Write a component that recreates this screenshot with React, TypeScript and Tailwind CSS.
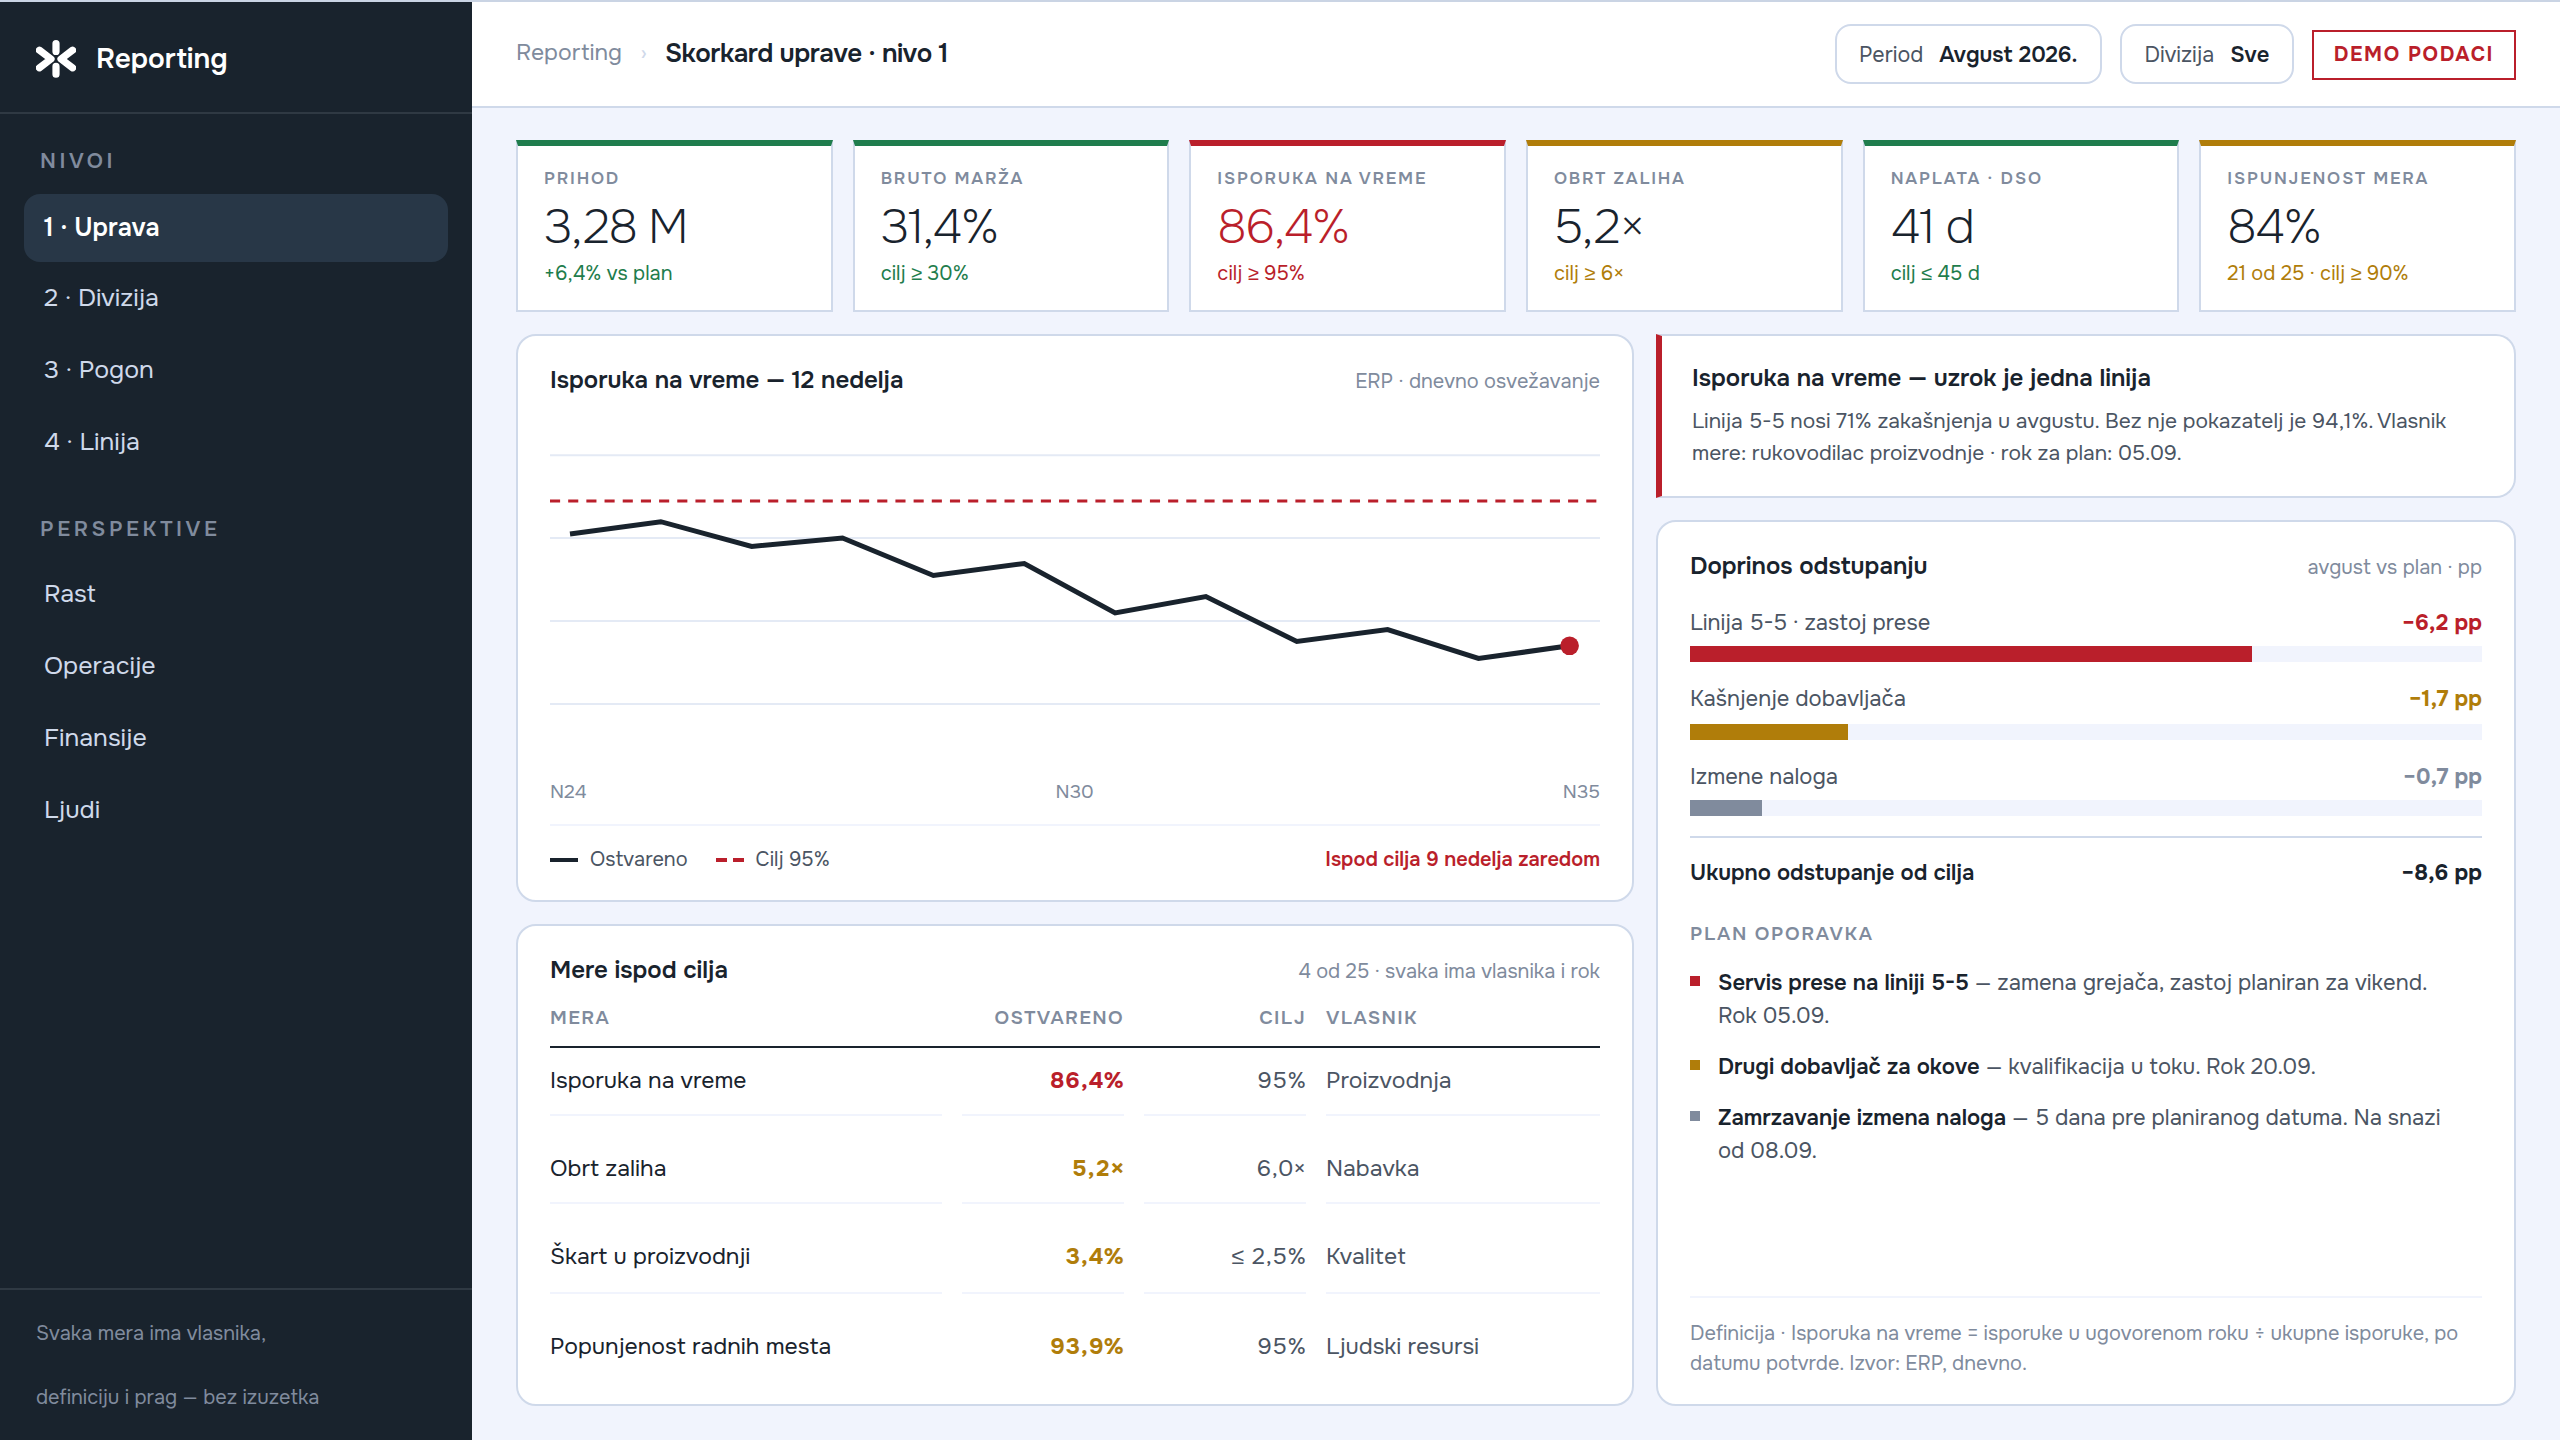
import type { ReactNode } from "react";
import clsx from "clsx";

type Tone = "good" | "warn" | "bad" | "mute";

const TEXT: Record<Tone, string> = {
  good: "text-[#1f7d4d]",
  warn: "text-[#b07d0a]",
  bad: "text-[#ba1f2b]",
  mute: "text-[#808b9d]",
};

const FILL: Record<Tone, string> = {
  good: "bg-[#1f7d4d]",
  warn: "bg-[#b07d0a]",
  bad: "bg-[#ba1f2b]",
  mute: "bg-[#808b9d]",
};

const TOP: Record<Tone, string> = {
  good: "border-t-[#1f7d4d]",
  warn: "border-t-[#b07d0a]",
  bad: "border-t-[#ba1f2b]",
  mute: "border-t-[#808b9d]",
};

const LEVELS = ["1 · Uprava", "2 · Divizija", "3 · Pogon", "4 · Linija"];
const PERSPECTIVES = ["Rast", "Operacije", "Finansije", "Ljudi"];

const KPIS: { label: string; value: string; note: string; tone: Tone; alert?: boolean }[] = [
  { label: "PRIHOD", value: "3,28 M", note: "+6,4% vs plan", tone: "good" },
  { label: "BRUTO MARŽA", value: "31,4%", note: "cilj ≥ 30%", tone: "good" },
  { label: "ISPORUKA NA VREME", value: "86,4%", note: "cilj ≥ 95%", tone: "bad", alert: true },
  { label: "OBRT ZALIHA", value: "5,2×", note: "cilj ≥ 6×", tone: "warn" },
  { label: "NAPLATA · DSO", value: "41 d", note: "cilj ≤ 45 d", tone: "good" },
  { label: "ISPUNJENOST MERA", value: "84%", note: "21 od 25 · cilj ≥ 90%", tone: "warn" },
];

const MEASURES: { name: string; actual: string; target: string; owner: string; tone: Tone; row: string; cell: string }[] = [
  { name: "Isporuka na vreme", actual: "86,4%", target: "95%", owner: "Proizvodnja", tone: "bad", row: "h-[68px]", cell: "border-b-2 pb-4" },
  { name: "Obrt zaliha", actual: "5,2×", target: "6,0×", owner: "Nabavka", tone: "warn", row: "h-[88px]", cell: "border-b-2 pb-4" },
  { name: "Škart u proizvodnji", actual: "3,4%", target: "≤ 2,5%", owner: "Kvalitet", tone: "warn", row: "h-[90px]", cell: "border-b-2 pb-[18px]" },
  { name: "Popunjenost radnih mesta", actual: "93,9%", target: "95%", owner: "Ljudski resursi", tone: "warn", row: "h-[88px]", cell: "pb-[18px]" },
];

const DRIVERS: { name: string; value: string; share: number; tone: Tone; gap: string }[] = [
  { name: "Linija 5-5 · zastoj prese", value: "−6,2 pp", share: 71, tone: "bad", gap: "mt-[9px]" },
  { name: "Kašnjenje dobavljača", value: "−1,7 pp", share: 20, tone: "warn", gap: "mt-[11px]" },
  { name: "Izmene naloga", value: "−0,7 pp", share: 9.1, tone: "mute", gap: "mt-[9px]" },
];

const PLAN: { title: string; text: string; tone: Tone }[] = [
  { title: "Servis prese na liniji 5-5", text: "zamena grejača, zastoj planiran za vikend. Rok 05.09.", tone: "bad" },
  { title: "Drugi dobavljač za okove", text: "kvalifikacija u toku. Rok 20.09.", tone: "warn" },
  { title: "Zamrzavanje izmena naloga", text: "5 dana pre planiranog datuma. Na snazi od 08.09.", tone: "mute" },
];

const POINTS = [122, 109.7, 134.5, 126, 163.5, 151.5, 201, 184.5, 229.5, 217.5, 246.5, 233.8];
const STEP = 90.85;

const COLS = "grid grid-cols-[392px_162px_162px_274px] gap-x-5";

// comparison signs are set in a second face, the main one draws them too small
function withSigns(text: string): ReactNode[] {
  return text.split(/([≤≥])/).map((part, i) =>
    part === "≤" || part === "≥" ? (
      <span key={i} className="font-['Liberation_Sans',sans-serif] leading-none">
        {part}
      </span>
    ) : (
      part
    ),
  );
}

function Logo() {
  return (
    <svg className="h-[38px] w-10" viewBox="36 40 40 38" fill="none" stroke="#fff" strokeWidth="7.2" strokeLinecap="round" strokeLinejoin="round">
      <path d="M56 43.6V51.4M56 66.4V74.2" />
      <path d="M39.4 50.2 51 59 39.4 67.8M72.6 50.2 61 59 72.6 67.8" />
    </svg>
  );
}

function NavGroup({ items, active }: { items: string[]; active?: string }) {
  return (
    <div className="flex flex-col gap-1">
      {items.map((item) => (
        <div
          key={item}
          className={clsx(
            "flex h-[68px] items-center rounded-2xl px-5 pt-0.5 text-[25px]",
            item === active ? "mb-[-2px] bg-[#283747] font-semibold text-white" : "text-[#cfd9ea]",
          )}
        >
          {item}
        </div>
      ))}
    </div>
  );
}

function Sidebar() {
  return (
    <aside className="flex w-[472px] shrink-0 flex-col bg-[#19232d]">
      <div className="flex h-28 items-center gap-5 border-b-2 border-[#2f3943] px-9 pt-1">
        <Logo />
        <span className="text-[28px] font-semibold text-white">Reporting</span>
      </div>
      <nav className="px-6 pt-[33px]">
        <p className="mb-[19px] px-4 text-[21px] leading-7 font-semibold tracking-[0.17em] text-[#808b9d]">NIVOI</p>
        <NavGroup items={LEVELS} active="1 · Uprava" />
        <p className="mt-[39px] mb-[17px] px-4 text-[21px] leading-7 font-semibold tracking-[0.17em] text-[#808b9d]">PERSPEKTIVE</p>
        <NavGroup items={PERSPECTIVES} />
      </nav>
      <div className="mt-auto h-[152px] border-t-2 border-[#2f3943] px-9 pt-3 text-[20px] leading-[64px] text-[#808b9d]">
        <p>Svaka mera ima vlasnika,</p>
        <p>definiciju i prag — bez izuzetka</p>
      </div>
    </aside>
  );
}

function Filter({ label, value }: { label: string; value: string }) {
  return (
    <div className="flex h-[60px] items-center gap-4 rounded-2xl border-2 border-[#cfd9ea] px-[22.5px] pt-0.5 text-[#4b5563]">
      <span className="text-[21.5px]">{label}</span>
      <b className="text-[22px] font-semibold text-[#19232d]">{value}</b>
    </div>
  );
}

function Topbar() {
  return (
    <header className="flex h-[106px] items-center justify-between border-b-2 border-[#cfd9ea] bg-white px-11">
      <div className="flex items-center pb-px">
        <span className="pb-px text-[23px] text-[#808b9d]">Reporting</span>
        <span className="w-[43px] text-center text-[22px] text-[#cfd9ea]">›</span>
        <h1 className="text-[26px] font-semibold tracking-[-0.018em]">Skorkard uprave · nivo 1</h1>
      </div>
      <div className="flex items-center gap-[18px]">
        <Filter label="Period" value="Avgust 2026." />
        <Filter label="Divizija" value="Sve" />
        <div className="mt-0.5 flex h-[50px] items-center border-2 border-[#ba1f2b] px-5 text-[20px] font-bold tracking-[0.08em] text-[#ba1f2b]">
          DEMO PODACI
        </div>
      </div>
    </header>
  );
}

function Card({ title, meta, className, children }: { title: string; meta: string; className?: string; children: ReactNode }) {
  return (
    <section className={clsx("flex flex-col rounded-[20px] border-2 border-[#cfd9ea] bg-white px-8 pt-7", className)}>
      <div className="flex h-8 items-baseline justify-between leading-8">
        <h2 className="text-[24px] leading-8 font-semibold">{title}</h2>
        <span className="text-[20px] text-[#808b9d]">{meta}</span>
      </div>
      {children}
    </section>
  );
}

function TrendChart() {
  const line = POINTS.map((y, i) => `${(20 + i * STEP).toFixed(1)},${y}`).join(" ");
  return (
    <svg className="mt-4 h-[360px] w-[1050px]" viewBox="0 0 1050 360" fill="none">
      {[43.3, 126, 209, 292].map((y) => (
        <line key={y} x1="0" x2="1050" y1={y} y2={y} stroke="#e4eaf5" strokeWidth="2" />
      ))}
      <line x1="0" x2="1050" y1="89" y2="89" stroke="#ba1f2b" strokeWidth="3.2" strokeDasharray="10.1 8.08" />
      <polyline points={line} stroke="#19232d" strokeWidth="5" />
      <circle cx="1019.6" cy="233.8" r="9.3" fill="#ba1f2b" />
    </svg>
  );
}

function TrendCard() {
  return (
    <Card title="Isporuka na vreme — 12 nedelja" meta="ERP · dnevno osvežavanje" className="h-[568px]">
      <TrendChart />
      <div className="mt-2 flex justify-between text-[19px] leading-6 text-[#808b9d]">
        <span>N24</span>
        <span>N30</span>
        <span>N35</span>
      </div>
      <div className="mt-5 flex items-center border-t-2 border-[#f1f4fd] pt-[21px] text-[20px] leading-[26px] text-[#4b5563]">
        <span className="h-1 w-7 bg-[#19232d]" />
        <span className="ml-3">Ostvareno</span>
        <span className="ml-7 flex gap-1.5">
          <i className="h-1 w-[11px] bg-[#ba1f2b]" />
          <i className="h-1 w-[11px] bg-[#ba1f2b]" />
        </span>
        <span className="ml-3">Cilj 95%</span>
        <b className="ml-auto font-semibold text-[#ba1f2b]">Ispod cilja 9 nedelja zaredom</b>
      </div>
    </Card>
  );
}

function MeasuresCard() {
  return (
    <Card title="Mere ispod cilja" meta="4 od 25 · svaka ima vlasnika i rok" className="h-[482px]">
      <div className={clsx(COLS, "mt-5 border-b-2 border-[#19232d] pb-4 text-[19px] leading-6 font-semibold tracking-[0.07em] text-[#808b9d]")}>
        <span>MERA</span>
        <span className="text-right">OSTVARENO</span>
        <span className="text-right">CILJ</span>
        <span>VLASNIK</span>
      </div>
      {MEASURES.map((m) => {
        const cell = clsx("flex items-end border-[#f1f4fd]", m.cell);
        return (
          <div key={m.name} className={clsx(COLS, m.row, "text-[23px] leading-[34px] text-[#4b5563]")}>
            <span className={clsx(cell, "text-[#19232d]")}>{m.name}</span>
            <span className={clsx(cell, "justify-end font-bold tabular-nums", TEXT[m.tone])}>{m.actual}</span>
            <span className={clsx(cell, "justify-end tabular-nums")}>
              <span>{withSigns(m.target)}</span>
            </span>
            <span className={cell}>{m.owner}</span>
          </div>
        );
      })}
    </Card>
  );
}

function DriversCard() {
  return (
    <Card title="Doprinos odstupanju" meta="avgust vs plan · pp" className="h-[886px] pb-[25px]">
      <div className="mt-[27px] flex flex-col gap-[23px]">
        {DRIVERS.map((d) => (
          <div key={d.name}>
            <div className="flex justify-between text-[22px] leading-7 text-[#4b5563]">
              {d.name}
              <b className={clsx("font-bold", TEXT[d.tone])}>{d.value}</b>
            </div>
            <div className={clsx("h-4 bg-[#f1f4fd]", d.gap)}>
              <div className={clsx("h-4", FILL[d.tone])} style={{ width: `${d.share}%` }} />
            </div>
          </div>
        ))}
      </div>
      <div className="mt-5 flex justify-between border-t-2 border-[#cfd9ea] pt-[21px] text-[22px] leading-7 font-semibold">
        <span>Ukupno odstupanje od cilja</span>
        <span className="font-bold">−8,6 pp</span>
      </div>
      <p className="mt-[35px] text-[19px] leading-6 font-semibold tracking-[0.085em] text-[#808b9d]">PLAN OPORAVKA</p>
      <ul className="mt-[21px] flex flex-col gap-[18px] text-[22px] leading-[33px] text-[#4b5563]">
        {PLAN.map((p) => (
          <li key={p.title} className="flex gap-[18px] pr-5">
            <i className={clsx("mt-[9px] size-2.5 shrink-0", FILL[p.tone])} />
            <p>
              <b className="font-semibold text-[#19232d]">{p.title}</b> — {p.text}
            </p>
          </li>
        ))}
      </ul>
      <p className="mt-auto border-t-2 border-[#f1f4fd] pt-[21px] text-[20px] leading-[30px] text-[#808b9d]">
        Definicija · Isporuka na vreme = isporuke u ugovorenom roku ÷ ukupne isporuke, po datumu potvrde. Izvor: ERP, dnevno.
      </p>
    </Card>
  );
}

export default function App() {
  return (
    <div className="flex h-[1440px] w-[2560px] overflow-hidden border-t-2 border-[#cad4e4] bg-[#f1f4fd] font-['Onest','Inter',sans-serif] text-[#19232d]">
      <Sidebar />
      <div className="flex flex-1 flex-col">
        <Topbar />
        <main className="flex flex-col gap-[22px] px-11 pt-8">
          <div className="grid grid-cols-6 gap-5">
            {KPIS.map((k) => (
              <div key={k.label} className={clsx("h-[172px] border-2 border-t-6 border-[#cfd9ea] bg-white px-[26px] pt-[22px]", TOP[k.tone])}>
                <p className="text-[17px] leading-[22px] font-semibold tracking-[0.105em] text-[#808b9d]">{k.label}</p>
                <p className={clsx("mt-[13px] text-[48px] leading-[48px] font-extralight tracking-[-0.03em]", k.alert && TEXT.bad)}>{k.value}</p>
                <p className={clsx("mt-2.5 text-[20px] leading-[26px]", TEXT[k.tone])}>{withSigns(k.note)}</p>
              </div>
            ))}
          </div>
          <div className="grid grid-cols-[1118px_860px] gap-x-[22px]">
            <div className="flex flex-col gap-[22px]">
              <TrendCard />
              <MeasuresCard />
            </div>
            <div className="flex flex-col gap-[22px]">
              <section className="h-[164px] rounded-r-[20px] border-2 border-l-6 border-[#cfd9ea] border-l-[#ba1f2b] bg-white px-[30px] pt-[27px]">
                <h2 className="text-[24px] leading-[30px] font-semibold">Isporuka na vreme — uzrok je jedna linija</h2>
                <p className="mt-3 text-[21px] leading-8 text-[#4b5563]">
                  Linija 5-5 nosi 71% zakašnjenja u avgustu. Bez nje pokazatelj je 94,1%. Vlasnik mere: rukovodilac proizvodnje · rok za plan: 05.09.
                </p>
              </section>
              <DriversCard />
            </div>
          </div>
        </main>
      </div>
    </div>
  );
}
